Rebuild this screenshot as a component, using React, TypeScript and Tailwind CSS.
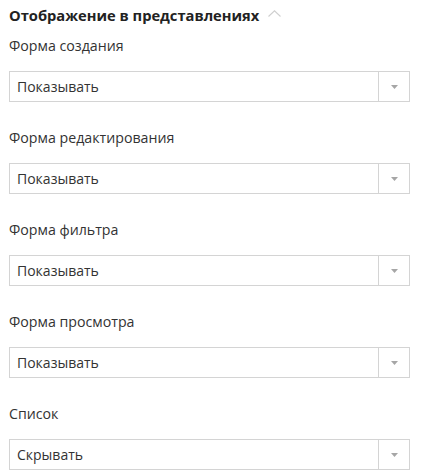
import React from "react";

const items = [
  { label: "Форма создания", value: "Показывать" },
  { label: "Форма редактирования", value: "Показывать" },
  { label: "Форма фильтра", value: "Показывать" },
  { label: "Форма просмотра", value: "Показывать" },
  { label: "Список", value: "Скрывать" },
];

export default function App() {
  return (
    <div
      className="w-[423px] h-[475px] bg-white px-[9px] pt-[5px] text-[14px] text-[#333]"
      style={{ fontFamily: '"Open Sans", sans-serif' }}
    >
      <div className="flex items-center h-[20px] leading-[20px]">
        <span className="font-bold text-[14.7px] text-[#222]">Отображение в представлениях</span>
        <svg className="ml-[9px] mt-[-4px]" width="13" height="7" viewBox="0 0 13 7" fill="none">
          <path d="M0.5 6.5 L6.5 0.8 L12.5 6.5" stroke="#cfcfcf" strokeWidth="1.1" />
        </svg>
      </div>
      <div className="flex flex-col">
        {items.map((it, i) => (
          <div key={i} className={i === 0 ? "mt-[11px]" : "mt-[26px]"}>
            <div className="h-[20px] leading-[20px] text-[14.2px] text-[#333]">{it.label}</div>
            <div className="mt-[15px] flex h-[31px] w-[401px] border border-[#d4d4d4] bg-white">
              <div className="flex-1 flex items-center pl-[7px] text-[#333]">{it.value}</div>
              <div className="w-[31px] border-l border-[#d4d4d4] flex items-center justify-center">
                <svg width="7" height="4" viewBox="0 0 7 4">
                  <path d="M0 0 L7 0 L3.5 4 Z" fill="#a6a6a6" />
                </svg>
              </div>
            </div>
          </div>
        ))}
      </div>
    </div>
  );
}
